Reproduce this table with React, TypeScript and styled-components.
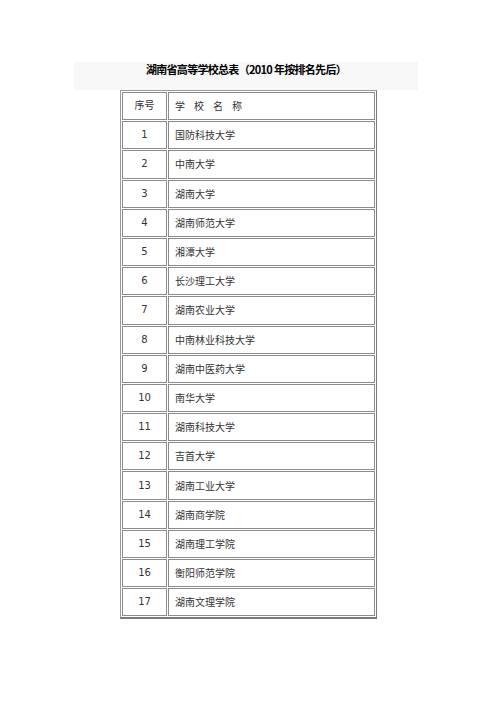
import React from "react";
import styled, { createGlobalStyle } from "styled-components";

const Global = createGlobalStyle`
  html, body { margin: 0; padding: 0; background: #ffffff; }
  body { font-family: "Noto Sans CJK SC", "DejaVu Sans", sans-serif; }
`;

const Page = styled.div`
  width: 496px;
  height: 702px;
  padding-top: 62px;
  box-sizing: border-box;
  display: flex;
  flex-direction: column;
`;

const TitleBand = styled.div`
  margin-left: 74px;
  width: 344px;
  height: 28px;
  box-sizing: border-box;
  padding-top: 1px;
  background: #f8f8f8;
  text-align: center;
`;

const Title = styled.h1`
  margin: 0;
  font-size: 11px;
  line-height: 12px;
  font-weight: 700;
  color: #000;
  letter-spacing: -0.7px;
`;

const Table = styled.table`
  margin-left: 120px;
  border-collapse: separate;
  border-spacing: 1px;
  border-top: 1px solid #9a9a9a;
  border-left: 1px solid #9a9a9a;
  border-right: 1px solid #7a7a7a;
  border-bottom: 2px solid #7a7a7a;
  width: 257px;
`;

const Cell = styled.td<{ $num?: boolean }>`
  border: 1px solid #8c8c8c;
  height: 26.2px;
  padding: 0 0 0 ${(p) => (p.$num ? 0 : 6)}px;
  width: ${(p) => (p.$num ? 43 : 199)}px;
  text-align: ${(p) => (p.$num ? "center" : "left")};
  font-size: 10px;
  line-height: 12px;
  color: #333;
  font-family: ${(p) =>
    p.$num
      ? '"DejaVu Sans", "Noto Sans CJK SC", sans-serif'
      : '"Noto Sans CJK SC", sans-serif'};
`;

const schools = [
  "国防科技大学",
  "中南大学",
  "湖南大学",
  "湖南师范大学",
  "湘潭大学",
  "长沙理工大学",
  "湖南农业大学",
  "中南林业科技大学",
  "湖南中医药大学",
  "南华大学",
  "湖南科技大学",
  "吉首大学",
  "湖南工业大学",
  "湖南商学院",
  "湖南理工学院",
  "衡阳师范学院",
  "湖南文理学院",
];

export default function App() {
  return (
    <>
      <Global />
      <Page>
        <TitleBand>
          <Title>湖南省高等学校总表（2010 年按排名先后）</Title>
        </TitleBand>
        <Table>
          <tbody>
            <tr>
              <Cell $num>序号</Cell>
              <Cell>
                学&nbsp;&nbsp;&nbsp;&nbsp;校&nbsp;&nbsp;&nbsp;&nbsp;名&nbsp;&nbsp;&nbsp;&nbsp;称
              </Cell>
            </tr>
            {schools.map((s, i) => (
              <tr key={s}>
                <Cell $num>{i + 1}</Cell>
                <Cell>{s}</Cell>
              </tr>
            ))}
          </tbody>
        </Table>
      </Page>
    </>
  );
}
